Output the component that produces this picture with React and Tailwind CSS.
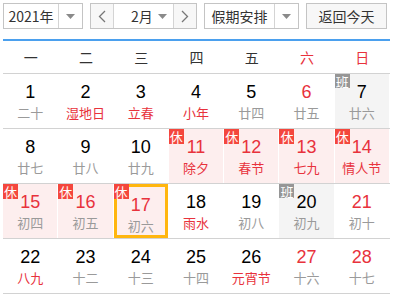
import React from 'react';

const RED = 'text-[#e8323c]';

const weeks = [
  [
    { d: 1, l: '二十' },
    { d: 2, l: '湿地日', lr: true },
    { d: 3, l: '立春', lr: true },
    { d: 4, l: '小年', lr: true },
    { d: 5, l: '廿四' },
    { d: 6, l: '廿五', dr: true },
    { d: 7, l: '廿六', work: true },
  ],
  [
    { d: 8, l: '廿七' },
    { d: 9, l: '廿八' },
    { d: 10, l: '廿九' },
    { d: 11, l: '除夕', lr: true, rest: true },
    { d: 12, l: '春节', lr: true, rest: true },
    { d: 13, l: '七九', lr: true, rest: true },
    { d: 14, l: '情人节', lr: true, rest: true },
  ],
  [
    { d: 15, l: '初四', rest: true },
    { d: 16, l: '初五', rest: true },
    { d: 17, l: '初六', rest: true, selected: true },
    { d: 18, l: '雨水', lr: true },
    { d: 19, l: '初八' },
    { d: 20, l: '初九', work: true },
    { d: 21, l: '初十', dr: true },
  ],
  [
    { d: 22, l: '八九', lr: true },
    { d: 23, l: '十二' },
    { d: 24, l: '十三' },
    { d: 25, l: '十四' },
    { d: 26, l: '元宵节', lr: true },
    { d: 27, l: '十六', dr: true },
    { d: 28, l: '十七', dr: true },
  ],
];

const Caret = () => (
  <svg width="9" height="5" viewBox="0 0 9 5"><path d="M0 0h9L4.5 5z" fill="#8a8a8a" /></svg>
);

const Chevron = ({ dir }) => (
  <svg width="8" height="13" viewBox="0 0 8 13">
    <path d={dir === 'left' ? 'M7 1L1.5 6.5 7 12' : 'M1 1l5.5 5.5L1 12'} fill="none" stroke="#777" strokeWidth="1.3" />
  </svg>
);

const Day = ({ c }) => {
  const red = c.rest || c.dr;
  let bg = 'bg-white';
  if (c.rest) bg = 'bg-[#fdeeee]';
  if (c.work) bg = 'bg-[#f4f4f4]';
  return (
    <div className={`relative mr-px flex flex-col items-center pt-[8px] ${bg} ${c.selected ? 'border-[3px] border-[#ffb60f] pt-[5px]' : ''}`}>
      {c.rest && (
        <span className={`absolute ${c.selected ? '-left-[3px] -top-[3px]' : 'left-0 top-0'} flex h-[15px] w-[15px] items-center justify-center bg-[#f4473d] text-[13px] leading-none text-white`}>休</span>
      )}
      {c.work && (
        <span className="absolute left-0 top-0 flex h-[14px] w-[15px] items-center justify-center bg-[#969696] text-[13px] leading-none text-white">班</span>
      )}
      <span className={`font-['Liberation_Sans',Arial,sans-serif] text-[18px] leading-[21px] ${red ? RED : 'text-black'}`}>{c.d}</span>
      <span className={`text-[13px] leading-[19px] ${c.lr ? RED : 'text-[#9a9a9a]'}`}>{c.l}</span>
    </div>
  );
};

const App = () => {
  return (
    <div className="h-[297px] w-[393px] bg-white px-[3px] pt-[3px] font-['Noto_Sans_CJK_SC','Microsoft_YaHei',sans-serif] text-[#333]">
      <div className="flex h-[26px] items-stretch text-[14px]">
        <div className="flex w-[80px] border border-[#c4c4c4] bg-white">
          <div className="flex w-[54px] items-center justify-center">2021年</div>
          <div className="flex flex-1 items-center justify-center border-l border-[#d4d4d4]"><Caret /></div>
        </div>
        <div className="ml-[7px] flex w-[107px] border border-[#c4c4c4] bg-white">
          <div className="flex w-[22px] items-center justify-center bg-[#f7f7f7]"><Chevron dir="left" /></div>
          <div className="flex flex-1 items-center border-x border-[#d4d4d4] pl-[17px] pr-[6px]">
            <span className="flex-1">2月</span>
            <Caret />
          </div>
          <div className="flex w-[22px] items-center justify-center bg-[#f7f7f7]"><Chevron dir="right" /></div>
        </div>
        <div className="ml-[7px] flex w-[95px] border border-[#c4c4c4] bg-white">
          <div className="flex w-[69px] items-center justify-center">假期安排</div>
          <div className="flex flex-1 items-center justify-center border-l border-[#d4d4d4]"><Caret /></div>
        </div>
        <button className="ml-[7px] flex w-[81px] items-center justify-center border border-[#c4c4c4] bg-[#f7f7f7] text-[#333]">返回今天</button>
      </div>

      <div className="mt-[10px] h-[2px] bg-[#4ba0ee]" />

      <div className="grid h-[33px] grid-cols-7 items-center border-b border-[#d2d2d2] text-[14px]">
        {['一', '二', '三', '四', '五', '六', '日'].map((w, i) => (
          <div key={w} className={`text-center ${i >= 5 ? RED : 'text-[#333]'}`}>{w}</div>
        ))}
      </div>

      {weeks.map((row, i) => (
        <div key={i} className="grid h-[55px] grid-cols-7 border-b border-[#d2d2d2]">
          {row.map((c) => (
            <Day key={c.d} c={c} />
          ))}
        </div>
      ))}
    </div>
  );
};

export default App;
